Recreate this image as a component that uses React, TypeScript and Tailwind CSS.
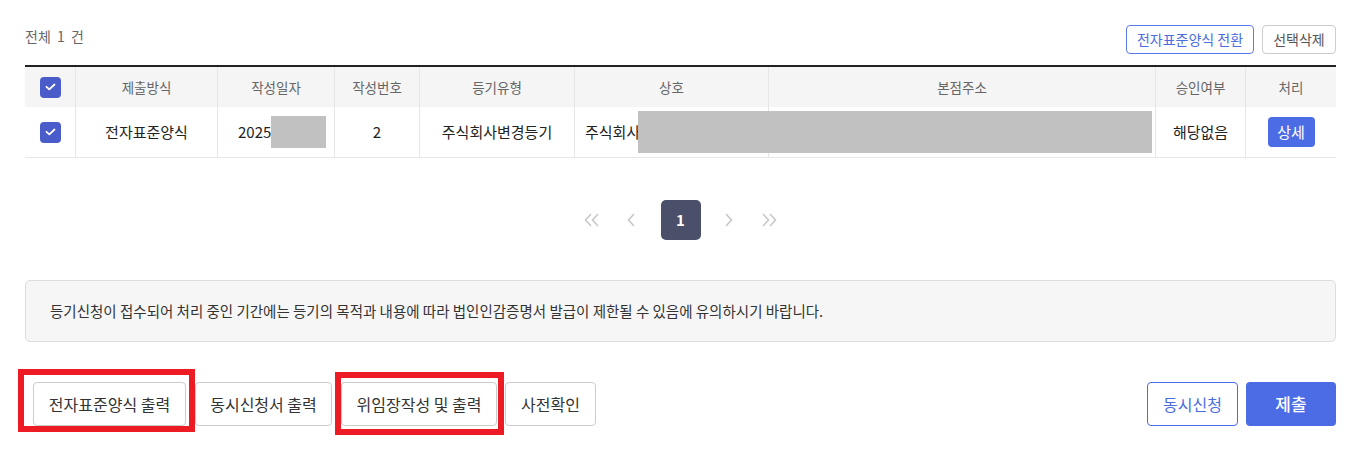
import React from "react";

const cols = [
  { label: "", w: "w-[50px]" },
  { label: "제출방식", w: "w-[142px]" },
  { label: "작성일자", w: "w-[117px]" },
  { label: "작성번호", w: "w-[85px]" },
  { label: "등기유형", w: "w-[155px]" },
  { label: "상호", w: "w-[194px]" },
  { label: "본점주소", w: "w-[387px]" },
  { label: "승인여부", w: "w-[90px]" },
  { label: "처리", w: "w-[91px]" },
];

function Check() {
  return (
    <span className="inline-flex h-[21px] w-[21px] items-center justify-center rounded-[4px] bg-[#4a5cc9]">
      <svg width="11" height="8" viewBox="0 0 11 8" fill="none">
        <path d="M1.5 3.8L4.3 6.3L9.5 1.5" stroke="white" strokeWidth="1.8" strokeLinecap="round" strokeLinejoin="round" />
      </svg>
    </span>
  );
}

function Chevron({ dir, double }: { dir: "l" | "r"; double?: boolean }) {
  const one = dir === "l" ? "M7 1L1.5 7L7 13" : "M1 1L6.5 7L1 13";
  return (
    <svg width={double ? 16 : 9} height="14" viewBox={double ? "0 0 16 14" : "0 0 9 14"} fill="none">
      <path d={one} stroke="#c8c8c8" strokeWidth="1.6" />
      {double && <path d={one} transform="translate(7 0)" stroke="#c8c8c8" strokeWidth="1.6" />}
    </svg>
  );
}

export default function App() {
  return (
    <div className="min-h-[469px] bg-white pl-[25px] pr-[20px] font-['Noto_Sans_CJK_KR','Noto_Sans',sans-serif] text-[#222]">
      {/* top bar */}
      <div className="flex items-center justify-between pt-[25px]">
        <span className="-mt-[6px] text-[14px] text-[#666]">전체&nbsp; 1&nbsp; 건</span>
        <div className="flex gap-[8px]">
          <button className="h-[29px] w-[128px] rounded-[4px] border border-[#5b7be8] text-[14px] text-[#4a6ee0]">전자표준양식 전환</button>
          <button className="h-[29px] w-[74px] rounded-[4px] border border-[#ccc] text-[14px] text-[#555]">선택삭제</button>
        </div>
      </div>

      {/* table */}
      <div className="mt-[11px] border-t-2 border-[#222]">
        <div className="flex h-[40px] bg-[#f5f5f5] text-[13.5px] text-[#666]">
          {cols.map((c, i) => (
            <div key={i} className={`${c.w} flex shrink-0 items-center justify-center ${i > 0 ? "border-l border-[#e6e6e6]" : ""}`}>
              {i === 0 ? <Check /> : c.label}
            </div>
          ))}
        </div>
        <div className="relative flex h-[51px] border-b border-[#e6e6e6] text-[15px]">
          <div className="flex w-[50px] shrink-0 items-center justify-center"><Check /></div>
          <div className="flex w-[142px] shrink-0 items-center justify-center border-l border-[#e6e6e6]">전자표준양식</div>
          <div className="flex w-[117px] shrink-0 items-center border-l border-[#e6e6e6] pl-[20px]">
            2025<span className="inline-block h-[32px] w-[55px] bg-[#c1c1c1]" />
          </div>
          <div className="flex w-[85px] shrink-0 items-center justify-center border-l border-[#e6e6e6]">2</div>
          <div className="flex w-[155px] shrink-0 items-center justify-center border-l border-[#e6e6e6]">주식회사변경등기</div>
          <div className="flex w-[194px] shrink-0 items-center border-l border-[#e6e6e6] pl-[10px]">주식회사</div>
          <div className="w-[387px] shrink-0 border-l border-[#e6e6e6]" />
          <div className="flex w-[90px] shrink-0 items-center justify-center border-l border-[#e6e6e6]">해당없음</div>
          <div className="flex w-[91px] shrink-0 items-center justify-center border-l border-[#e6e6e6]">
            <button className="h-[30px] w-[47px] rounded-[4px] bg-[#4c6ce6] text-[15px] text-white">상세</button>
          </div>
          {/* redaction */}
          <div className="absolute left-[613px] top-[4px] h-[42px] w-[514px] bg-[#c1c1c1]" />
        </div>
      </div>

      {/* pagination */}
      <div className="mt-[42px] flex items-center justify-center">
        <span className="flex h-[40px] w-[40px] items-center justify-center"><Chevron dir="l" double /></span>
        <span className="flex h-[40px] w-[40px] items-center justify-center"><Chevron dir="l" /></span>
        <span className="mx-[9px] flex h-[40px] w-[40px] items-center justify-center rounded-[5px] bg-[#4a506a] text-[15px] font-bold text-white">1</span>
        <span className="flex h-[40px] w-[40px] items-center justify-center"><Chevron dir="r" /></span>
        <span className="flex h-[40px] w-[40px] items-center justify-center"><Chevron dir="r" double /></span>
      </div>

      {/* notice */}
      <div className="mt-[40px] flex h-[62px] items-center rounded-[5px] border border-[#dddddd] bg-[#f6f6f6] pl-[24px] text-[14.5px] text-[#333]">
        등기신청이 접수되어 처리 중인 기간에는 등기의 목적과 내용에 따라 법인인감증명서 발급이 제한될 수 있음에 유의하시기 바랍니다.
      </div>

      {/* actions */}
      <div className="relative mt-[40px] flex items-center justify-between">
        <div className="flex gap-[9px] pl-[8px]">
          <button className="h-[44px] w-[153px] rounded-[4px] border border-[#cccccc] text-[16px] text-[#333]">전자표준양식 출력</button>
          <button className="h-[44px] w-[137px] rounded-[4px] border border-[#cccccc] text-[16px] text-[#333]">동시신청서 출력</button>
          <button className="h-[44px] w-[156px] rounded-[4px] border border-[#cccccc] text-[16px] text-[#333]">위임장작성 및 출력</button>
          <button className="-ml-[1px] h-[44px] w-[91px] rounded-[4px] border border-[#cccccc] text-[16px] text-[#333]">사전확인</button>
        </div>
        <div className="flex gap-[8px]">
          <button className="h-[44px] w-[91px] rounded-[4px] border border-[#4c6ce6] text-[16px] text-[#4a6ee0]">동시신청</button>
          <button className="h-[44px] w-[90px] rounded-[4px] bg-[#4c6ce6] text-[17px] font-medium text-white">제출</button>
        </div>
        {/* highlight boxes */}
        <div className="pointer-events-none absolute -left-[7px] -top-[13px] h-[63px] w-[177px] border-[6px] border-[#ed1c24]" />
        <div className="pointer-events-none absolute left-[310px] -top-[10px] h-[63px] w-[169px] border-[6px] border-[#ed1c24]" />
      </div>
    </div>
  );
}
